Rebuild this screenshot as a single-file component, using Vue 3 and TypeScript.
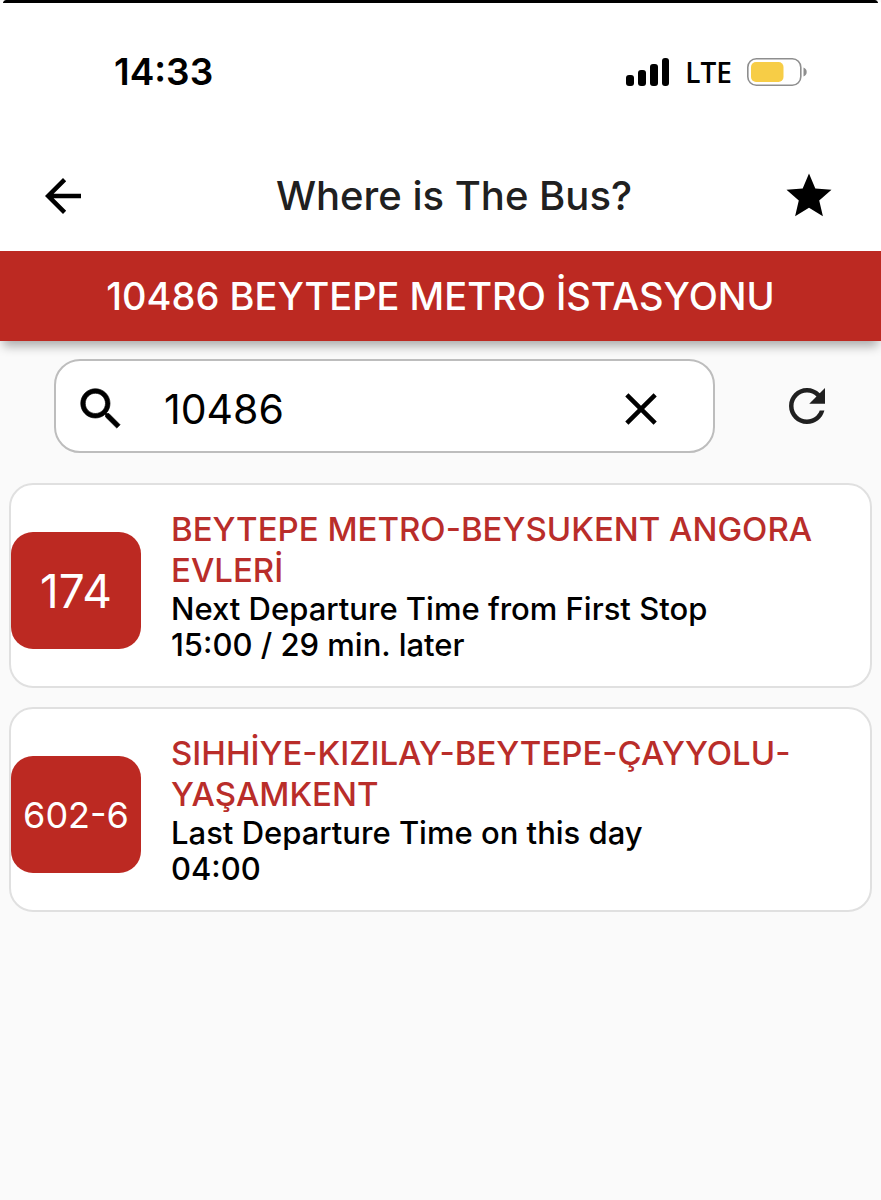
<script setup lang="ts">
import { ref } from 'vue'

interface Line {
  code: string
  route: string
  label: string
  time: string
}

const query = ref<string>('10486')

const lines: Line[] = [
  {
    code: '174',
    route: 'BEYTEPE METRO-BEYSUKENT ANGORA EVLERİ',
    label: 'Next Departure Time from First Stop',
    time: '15:00 / 29 min. later',
  },
  {
    code: '602-6',
    route: 'SIHHİYE-KIZILAY-BEYTEPE-ÇAYYOLU-YAŞAMKENT',
    label: 'Last Departure Time on this day',
    time: '04:00',
  },
]
</script>

<template>
  <div class="screen">
    <div class="edge"></div>
    <div class="status">
      <span class="clock">14:33</span>
      <div class="indicators">
        <svg class="signal" viewBox="0 0 44 28" aria-hidden="true">
          <rect x="0" y="17" width="8" height="11" rx="3" />
          <rect x="12" y="12" width="8" height="16" rx="3" />
          <rect x="24" y="6" width="8" height="22" rx="3" />
          <rect x="36" y="0" width="7" height="28" rx="3" />
        </svg>
        <span class="network">LTE</span>
        <svg class="battery" viewBox="0 0 60 28" aria-hidden="true">
          <rect x="0.8" y="0.8" width="53" height="26.4" rx="8.5" fill="none" stroke="#8e8e8e" stroke-width="1.6" />
          <rect x="4" y="4" width="32.5" height="20" rx="5" fill="#f7cd46" />
          <path d="M56.5 9.5c2 .8 3.2 2.5 3.2 4.5s-1.2 3.7-3.2 4.5z" fill="#8e8e8e" />
        </svg>
      </div>
    </div>

    <header class="appbar">
      <button class="icon-button" type="button" aria-label="Back">
        <svg class="icon" viewBox="0 0 24 24"><path d="M20 11H7.83l5.59-5.59L12 4l-8 8 8 8 1.41-1.41L7.83 13H20v-2z" /></svg>
      </button>
      <h1 class="title">Where is The Bus?</h1>
      <button class="icon-button" type="button" aria-label="Favourite">
        <svg class="icon" viewBox="0 0 24 24"><path d="M12 17.27L18.18 21l-1.64-7.03L22 9.24l-7.19-.61L12 2 9.19 8.63 2 9.24l5.46 4.73L5.82 21z" /></svg>
      </button>
    </header>

    <h2 class="banner">10486 BEYTEPE METRO İSTASYONU</h2>

    <main class="content">
      <form class="search-row" @submit.prevent>
        <div class="search">
          <label class="search-label" for="stop" aria-label="Stop number">
            <svg class="icon" viewBox="0 0 24 24"><path d="M15.5 14h-.79l-.28-.27C15.41 12.59 16 11.11 16 9.5 16 5.91 13.09 3 9.5 3S3 5.91 3 9.5 5.91 16 9.5 16c1.61 0 3.09-.59 4.23-1.57l.27.28v.79l5 4.99L20.49 19l-4.99-5zm-6 0C7.01 14 5 11.99 5 9.5S7.01 5 9.5 5 14 7.01 14 9.5 11.99 14 9.5 14z" stroke="currentColor" stroke-width="0.3" /></svg>
          </label>
          <input id="stop" v-model="query" class="field" type="text" inputmode="numeric" />
          <button class="icon-button" type="button" aria-label="Clear" @click="query = ''">
            <svg class="icon" viewBox="0 0 24 24"><path d="M19 6.41L17.59 5 12 10.59 6.41 5 5 6.41 10.59 12 5 17.59 6.41 19 12 13.41 17.59 19 19 17.59 13.41 12z" /></svg>
          </button>
        </div>
        <button class="icon-button refresh" type="submit" aria-label="Refresh">
          <svg class="icon" viewBox="0 0 24 24"><path d="M17.65 6.35C16.2 4.9 14.21 4 12 4c-4.42 0-7.99 3.58-7.99 8s3.57 8 7.99 8c3.73 0 6.84-2.55 7.73-6h-2.08c-.82 2.33-3.04 4-5.65 4-3.31 0-6-2.69-6-6s2.69-6 6-6c1.66 0 3.14.69 4.22 1.78L13 11h7V4l-2.35 2.35z" /></svg>
        </button>
      </form>

      <ul class="lines">
        <li v-for="line in lines" :key="line.code" class="card">
          <span class="badge" :class="{ long: line.code.length > 3 }">{{ line.code }}</span>
          <div class="details">
            <h3 class="route">{{ line.route }}</h3>
            <p class="departure">{{ line.label }}</p>
            <p class="departure">{{ line.time }}</p>
          </div>
        </li>
      </ul>
    </main>
  </div>
</template>

<style>
body {
  margin: 0;
  background: #fafafa;
}
</style>

<style scoped>
.screen {
  display: flex;
  flex-direction: column;
  min-height: 100vh;
  background: #fafafa;
  color: #000;
  font-family: Inter, Roboto, sans-serif;
}

h1,
h2,
h3,
p,
ul {
  margin: 0;
  padding: 0;
}

.edge {
  height: 3px;
  border: solid #fff;
  border-width: 0 3px;
  border-radius: 6px 6px 0 0 / 3px 3px 0 0;
  background: #000;
  background-clip: padding-box;
}

.status {
  display: flex;
  align-items: center;
  justify-content: space-between;
  height: 137px;
  padding: 0 74px 0 114px;
  background: #fff;
}

.clock {
  font-size: 37px;
  font-weight: 600;
}

.indicators {
  display: flex;
  align-items: center;
  gap: 15px;
}

.signal {
  width: 44px;
  height: 28px;
}

.network {
  font-family: "Open Sans", Inter, sans-serif;
  font-size: 28px;
  font-weight: 600;
}

.battery {
  width: 60px;
  height: 28px;
}

.appbar {
  display: flex;
  align-items: center;
  height: 111px;
  padding: 0 45px 0 36px;
  background: #fff;
}

.title {
  flex: 1;
  padding-left: 36px;
  color: #202020;
  font-size: 40px;
  font-weight: 450;
  text-align: center;
}

.icon-button {
  display: flex;
  flex: none;
  padding: 0;
  border: 0;
  background: none;
  color: inherit;
  cursor: pointer;
}

.icon {
  display: block;
  width: 54px;
  height: 54px;
  fill: currentColor;
}

.banner {
  padding: 20px 16px;
  background: #bc2922;
  box-shadow: 0 8px 10px -3px rgba(0, 0, 0, 0.32);
  color: #fff;
  font-size: 38px;
  font-weight: 500;
  line-height: 50px;
  text-align: center;
}

.content {
  display: flex;
  flex-direction: column;
  gap: 30px;
  padding: 18px 9px;
}

.search-row {
  display: flex;
  align-items: center;
  padding-left: 45px;
}

.search {
  display: flex;
  flex: 1;
  align-items: center;
  box-sizing: border-box;
  height: 94px;
  min-width: 0;
  padding: 6px 45px 0 18px;
  border: 2px solid #bdbdbd;
  border-radius: 26px;
  background: #fff;
}

.search-label {
  flex: none;
}

.field {
  flex: 1;
  min-width: 0;
  padding: 0 0 0 36px;
  border: 0;
  outline: 0;
  background: none;
  color: #000;
  font: inherit;
  font-size: 41px;
}

.refresh {
  padding: 0 38px 0 65px;
  color: #202020;
}

.lines {
  display: flex;
  flex-direction: column;
  gap: 19px;
  list-style: none;
}

.card {
  display: flex;
  align-items: flex-start;
  gap: 30px;
  padding: 24px 30px 23px 0;
  border: 2px solid #e0e0e0;
  border-radius: 24px;
  background: #fff;
}

.badge {
  display: flex;
  flex: none;
  align-items: center;
  justify-content: center;
  width: 130px;
  height: 117px;
  margin-top: 23px;
  border-radius: 22px;
  background: #bc2922;
  color: #fff;
  font-size: 46px;
}

.badge.long {
  font-size: 36px;
}

.details {
  flex: 1;
  min-width: 0;
}

.route {
  color: #b92d2a;
  font-size: 33px;
  font-weight: 450;
  line-height: 41px;
}

.departure {
  font-size: 31px;
  font-weight: 450;
  line-height: 36px;
}
</style>
